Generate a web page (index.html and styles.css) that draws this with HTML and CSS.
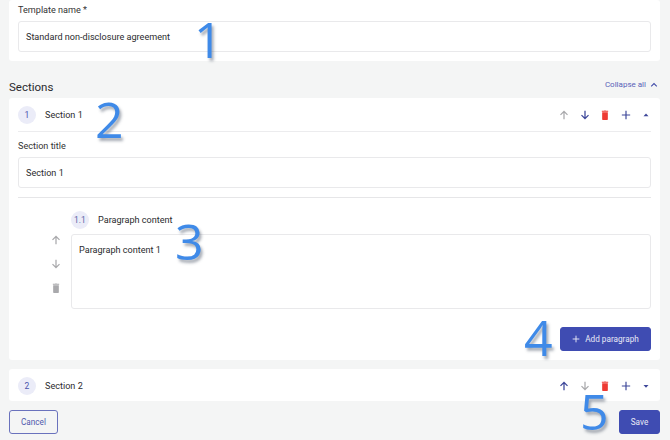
FILE: index.html
```html
<!DOCTYPE html>
<html lang="en">
<head>
<meta charset="utf-8">
<title>Template</title>
<link rel="stylesheet" href="styles.css">
</head>
<body>
<svg class="defs" width="0" height="0" aria-hidden="true">
  <symbol id="up" viewBox="0 0 12 12"><path d="M6 11V1.8M1.8 5.8 6 1.6l4.2 4.2" fill="none" stroke="currentColor" stroke-width="1.5"/></symbol>
  <symbol id="down" viewBox="0 0 12 12"><path d="M6 1v9.2M1.8 6.2 6 10.4l4.2-4.2" fill="none" stroke="currentColor" stroke-width="1.5"/></symbol>
  <symbol id="trash" viewBox="0 0 12 12"><path d="M2.6 2.8h6.8v8.4a.8.8 0 0 1-.8.8H3.4a.8.8 0 0 1-.8-.8zM2.2 .9h2.5l.4-.4h1.8l.4.4h2.5v1.2H2.2z" fill="currentColor"/></symbol>
  <symbol id="plus" viewBox="0 0 12 12"><path d="M6 1v10M1 6h10" fill="none" stroke="currentColor" stroke-width="1.4"/></symbol>
  <symbol id="caret-up" viewBox="0 0 12 12"><path d="M3 7.4 6 4.2l3 3.2z" fill="currentColor"/></symbol>
  <symbol id="caret-down" viewBox="0 0 12 12"><path d="M3 4.8 6 8l3-3.2z" fill="currentColor"/></symbol>
</svg>
<main class="page">
  <section class="card name-card">
    <label class="label">Template name *</label>
    <div class="field">Standard non-disclosure agreement</div>
  </section>

  <div class="sections-head">
    <h2 class="sections-title">Sections</h2>
    <a class="collapse">Collapse all
      <svg class="chev" viewBox="0 0 10 10"><path d="M1.5 6.6 5 3.2l3.5 3.4" fill="none" stroke="currentColor" stroke-width="1.3"/></svg>
    </a>
  </div>

  <section class="card section-card">
    <header class="sec-head">
      <span class="badge">1</span>
      <span class="sec-name">Section 1</span>
      <div class="tools">
        <svg class="ico muted"><use href="#up"/></svg>
        <svg class="ico primary"><use href="#down"/></svg>
        <svg class="ico red"><use href="#trash"/></svg>
        <svg class="ico primary"><use href="#plus"/></svg>
        <svg class="ico primary"><use href="#caret-up"/></svg>
      </div>
    </header>
    <div class="sec-body">
      <label class="label">Section title</label>
      <div class="field">Section 1</div>
      <hr class="rule">
      <div class="para">
        <div class="para-head">
          <span class="badge small">1.1</span>
          <span class="para-name">Paragraph content</span>
        </div>
        <div class="para-row">
          <div class="para-tools">
            <svg class="ico muted"><use href="#up"/></svg>
            <svg class="ico muted"><use href="#down"/></svg>
            <svg class="ico muted"><use href="#trash"/></svg>
          </div>
          <div class="area">Paragraph content 1</div>
        </div>
      </div>
      <div class="add-row">
        <button class="btn add"><svg class="ico-add" viewBox="0 0 12 12"><path d="M6 1v10M1 6h10" fill="none" stroke="currentColor" stroke-width="1.4"/></svg>Add paragraph</button>
      </div>
    </div>
  </section>

  <section class="card section-card second">
    <header class="sec-head plain">
      <span class="badge">2</span>
      <span class="sec-name">Section 2</span>
      <div class="tools">
        <svg class="ico primary"><use href="#up"/></svg>
        <svg class="ico muted"><use href="#down"/></svg>
        <svg class="ico red"><use href="#trash"/></svg>
        <svg class="ico primary"><use href="#plus"/></svg>
        <svg class="ico primary"><use href="#caret-down"/></svg>
      </div>
    </header>
  </section>

  <footer class="actions">
    <button class="btn ghost">Cancel</button>
    <button class="btn save">Save</button>
  </footer>
</main>
<span class="mark m1">1</span>
<span class="mark m2">2</span>
<span class="mark m3">3</span>
<span class="mark m4">4</span>
<span class="mark m5">5</span>
</body>
</html>
```
FILE: styles.css
```css
* { box-sizing: border-box; }
html, body { margin: 0; height: 100%; }
body {
  position: relative;
  width: 670px;
  height: 440px;
  overflow: hidden;
  background: #f4f5f5;
  font-family: Roboto, "Liberation Sans", sans-serif;
  font-size: 9px;
  color: #2b2b2e;
}
.defs { position: absolute; }
.page { padding: 0 10px 0 9px; display: flex; flex-direction: column; }
.card { background: #fff; border-radius: 3px; }
.name-card { height: 61px; padding: 5px 9px 0; }
.label { display: block; height: 16px; line-height: 11px; font-size: 9.1px; color: #333; }
.field {
  height: 31px;
  padding: 0 7px;
  line-height: 30px;
  border: 1px solid #e9e9eb;
  border-radius: 3px;
  font-size: 9.1px;
  background: #fff;
}
.sections-head {
  height: 37px;
  display: flex;
  align-items: flex-end;
  justify-content: space-between;
  padding: 0 2px 3px 0;
}
.sections-title { margin: 0; font-size: 11.5px; font-weight: 400; line-height: 16px; color: #2a2a2e; }
.collapse { display: flex; align-items: center; gap: 4px; font-size: 8px; line-height: 16px; color: #5a62b8; margin-bottom: 2px; }
.chev { width: 8px; height: 8px; color: #3f4aa8; }
.section-card { height: 262px; }
.sec-head { height: 34px; margin: 0 9px; display: flex; align-items: center; border-bottom: 1.5px solid #ececee; }
.sec-head.plain { border-bottom: 0; height: 33px; }
.badge {
  width: 18px; height: 18px; border-radius: 50%;
  background: #ebecf8; color: #4a53ad;
  font-size: 8.5px; line-height: 18px; text-align: center;
}
.badge.small { color: #5b63a8; }
.sec-name { margin-left: 9px; font-size: 9.1px; color: #2b2b2e; }
.tools { margin-left: auto; display: flex; gap: 10.4px; margin-right: 0; }
.ico { width: 10px; height: 10px; display: block; }
.muted { color: #a9a9ac; }
.primary { color: #3c4699; }
.red { color: #ee3a33; }
.sec-body { padding: 8px 9px 0; }
.sec-body .label { height: 17px; line-height: 12px; }
.rule { margin: 9px 0 0; border: 0; border-top: 1.5px solid #e6e6e8; }
.para { margin-top: 13px; }
.para-head { display: flex; align-items: center; height: 18px; margin-left: 53px; }
.para-name { margin-left: 9px; font-size: 9.1px; }
.para-row { display: flex; align-items: flex-start; margin-top: 5px; }
.para-tools { width: 53px; padding: 1px 0 0 33px; display: flex; flex-direction: column; gap: 14px; }
.area {
  flex: 1; height: 75px; padding: 9px 7px;
  border: 1px solid #e9e9eb; border-radius: 3px;
  font-size: 9.1px; line-height: 12px;
}
.add-row { display: flex; justify-content: flex-end; margin-top: 18px; }
.btn {
  font-family: inherit; font-size: 8.2px; border-radius: 3px; border: 1px solid #3f4cb2;
  padding: 0; cursor: pointer;
}
.add, .save { background: #3f4cb2; color: #e8e9f6; }
.add { width: 91px; height: 24px; display: flex; align-items: center; justify-content: center; gap: 5px; }
.ico-add { width: 8px; height: 8px; }
.second { height: 32px; margin-top: 9px; }
.actions { display: flex; justify-content: space-between; margin-top: 9px; }
.ghost { width: 49px; height: 24px; background: transparent; color: #4f58ad; border-color: #6a72bd; }
.save { width: 41px; height: 24px; }
.mark {
  position: absolute;
  font-family: "Open Sans", sans-serif;
  font-size: 50px;
  line-height: 50px;
  color: #3f8ae8;
  text-shadow: 2px 3px 3px rgba(60, 70, 90, .45);
}
.m1 { left: 194px; top: 14px; }
.m2 { left: 95px; top: 94px; }
.m3 { left: 175px; top: 216px; }
.m4 { left: 524px; top: 312px; }
.m5 { left: 580px; top: 386px; }
```
